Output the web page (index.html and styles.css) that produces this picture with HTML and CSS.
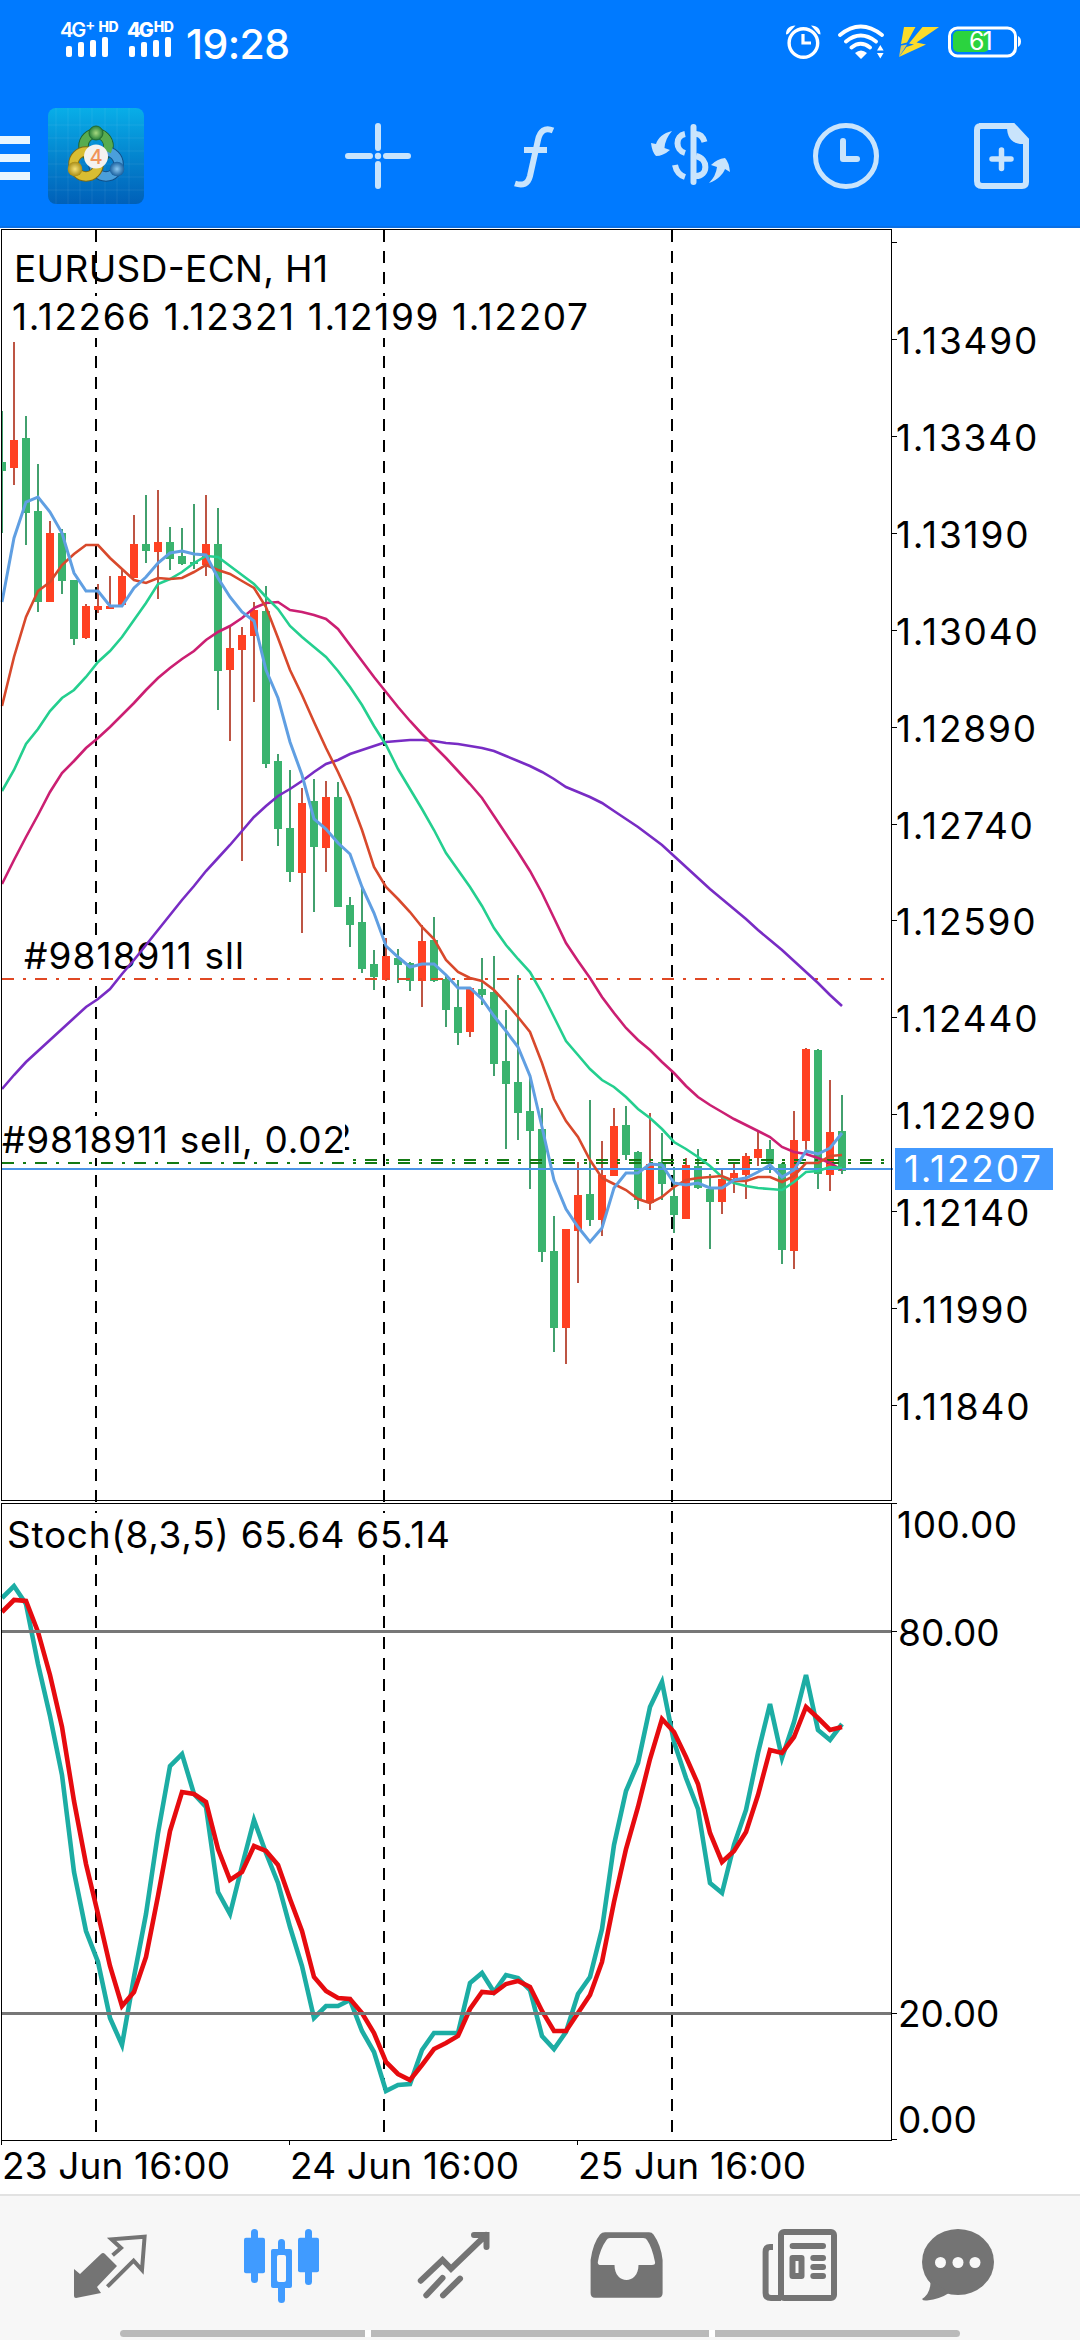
FILE: index.html
```html
<!DOCTYPE html>
<html lang="en">
<head>
  <meta charset="UTF-8">
  <meta name="viewport" content="width=device-width, initial-scale=1.0">
  <title>EURUSD-ECN, H1</title>
  <link rel="stylesheet" href="styles.css">
</head>
<body>
  <header class="header">
    <div class="status-bar">
      <div class="signal">
        <div class="network">4G<sup>+</sup><b>HD</b></div>
        <svg width="42" height="20" viewBox="0 0 42 20"><rect x="0" y="9" width="6" height="11" rx="2"/><rect x="12" y="5" width="6" height="15" rx="2"/><rect x="24" y="3" width="6" height="17" rx="2"/><rect x="36" y="0" width="6" height="20" rx="2"/></svg>
      </div>
      <div class="signal second">
        <div class="network strong">4G<b>HD</b></div>
        <svg width="42" height="20" viewBox="0 0 42 20"><rect x="0" y="9" width="6" height="11" rx="2"/><rect x="12" y="5" width="6" height="15" rx="2"/><rect x="24" y="3" width="6" height="17" rx="2"/><rect x="36" y="0" width="6" height="20" rx="2"/></svg>
      </div>
      <div class="clock">19:28</div>
      <div class="status-icons">
        <svg class="alarm" width="36" height="36" viewBox="0 0 36 36">
          <circle cx="18.4" cy="19" r="14.3" fill="none" stroke="#fff" stroke-width="3.4"/>
          <path d="M18 10v9h8" fill="none" stroke="#fff" stroke-width="3.2"/>
          <path d="M1 10.500C1 5 4 1.500 10.500 1.500L3 10zM35.500 10.500C35.500 5 32.500 1.500 26 1.500L33.500 10z" fill="#fff"/>
        </svg>
        <svg class="wifi" width="48" height="36" viewBox="0 0 48 36">
          <g fill="none" stroke="#fff" stroke-width="3.8" stroke-linecap="round">
            <path d="M3 11Q23.500 -6 45 11M9 17.500Q23.500 5.500 39 17.500M14.500 23.500Q23.500 16 33 23.500"/>
          </g>
          <path d="M18 29Q24 24 30 29L24 35zM40 26.500L43.300 21 46.600 26.500zM40 29L43.300 34.500 46.600 29z" fill="#fff"/>
        </svg>
        <svg class="bolt" width="42" height="32" viewBox="0 0 42 32">
          <path d="M6 1H17.500L9 16.500 3 18zM24.500 1H41L18.500 16.500 28 18.500 1 31 8.500 21 16 18.500 11 17.500z" fill="#fbdb2c"/>
          <path d="M3 19.500L9 18.500 1 31z" fill="#d7c95e"/>
        </svg>
        <svg class="battery" width="73" height="32" viewBox="0 0 73 32">
          <rect x="5" y="5" width="36" height="21" rx="5" fill="#2bd33f"/>
          <rect x="1.500" y="2" width="66" height="28" rx="8" fill="none" stroke="#fff" stroke-width="3"/>
          <path d="M70 10c4 2 4 9 0 11z" fill="#fff"/>
          <text x="21" y="24">61</text>
        </svg>
      </div>
    </div>
    <div class="toolbar">
      <div class="menu"><span></span><span></span><span></span></div>
      <svg class="app-icon" width="96" height="96" viewBox="0 0 96 96">
        <defs>
          <linearGradient id="tile" x1="0" y1="0" x2="0" y2="1"><stop offset="0" stop-color="#08aee8"/><stop offset=".5" stop-color="#0485cf"/><stop offset="1" stop-color="#0060b8"/></linearGradient>
          <radialGradient id="green"><stop offset="0" stop-color="#a6d97f"/><stop offset="1" stop-color="#27803a"/></radialGradient>
          <radialGradient id="yellow"><stop offset="0" stop-color="#f6e277"/><stop offset="1" stop-color="#a88c16"/></radialGradient>
          <radialGradient id="blue"><stop offset="0" stop-color="#8cc8f0"/><stop offset="1" stop-color="#19609f"/></radialGradient>
        </defs>
        <rect width="96" height="96" rx="8" fill="url(#tile)"/>
        <path d="M8 0V96M20 0V96M32 0V96M44 0V96M57 0V96M69 0V96M81 0V96M0 17H96M0 30H96M0 43H96M0 56H96M0 69H96M0 82H96" stroke="#fff" stroke-opacity=".07"/>
        <circle cx="48" cy="38" r="12.500" fill="none" stroke="#1f6330" stroke-width="10.500"/>
        <circle cx="48" cy="38" r="12.500" fill="none" stroke="#57ac4f" stroke-width="8.500"/>
        <circle cx="58" cy="56" r="12.500" fill="none" stroke="#114f87" stroke-width="10.500"/>
        <circle cx="58" cy="56" r="12.500" fill="none" stroke="#4a9fdb" stroke-width="8.500"/>
        <circle cx="38" cy="56" r="12.500" fill="none" stroke="#7c6b16" stroke-width="10.500"/>
        <circle cx="38" cy="56" r="12.500" fill="none" stroke="#d9bd32" stroke-width="8.500"/>
        <path d="M48 25.500a12.500 12.500 0 0 1 11 18" fill="none" stroke="#57ac4f" stroke-width="8.500"/>
        <circle cx="48" cy="25" r="7" fill="url(#green)" stroke="#236b2f"/>
        <circle cx="27" cy="61" r="7.300" fill="url(#yellow)"/>
        <circle cx="69" cy="61" r="7.300" fill="url(#blue)"/>
        <circle cx="48" cy="48.500" r="12" fill="#f4f2f0"/>
        <text x="41.500" y="55.500">4</text>
      </svg>
      <svg class="tool crosshair" width="66" height="66" viewBox="0 0 66 66">
        <path d="M33 3V25M33 41V63M3 33H25M41 33H63" stroke-width="6" stroke-linecap="round"/>
        <circle class="solid" cx="33" cy="33" r="3.200"/>
      </svg>
      <svg class="tool function" width="42" height="62" viewBox="0 0 42 62">
        <path d="M40 4.500C32 1 27 5 25 14L17 50C15 58 10 60 2 57.500M11 24H34" stroke-width="6"/>
      </svg>
      <svg class="tool trade" width="80" height="62" viewBox="0 0 80 62">
        <path d="M42.500 3V58" stroke-width="6" stroke-linecap="round"/>
        <path d="M34 10C24 12 24 26 34 29M45 10C50 10 52 13 53.500 18M34 53C28 51 25 46 24 41M45 32C58 35 57 52 45 52" stroke-width="6"/>
        <path class="solid" d="M21 7C12 9 7 14 5 20L0 19Q1 28 5 32Q12 32 19 26L13.500 24Q14 15 21 7zM58 59C67 56 72 50 74 45L79 48Q78 38 74 34Q66 35 60 41L66 43Q65 52 58 59z"/>
      </svg>
      <svg class="tool history" width="66" height="66" viewBox="0 0 66 66">
        <circle cx="33" cy="33" r="30.500" stroke-width="5"/>
        <path d="M30 18V36H44" stroke-width="6" stroke-linecap="round" stroke-linejoin="round"/>
      </svg>
      <svg class="tool new-order" width="56" height="66" viewBox="0 0 56 66">
        <path d="M5 3H39L52 17V59Q52 63 48 63H8Q3 63 3 58V7Q3 3 7 3z" stroke-width="6"/>
        <path class="solid" d="M33 4H40L54 18V21H46Q33 19 33 4z"/>
        <path d="M27.500 27V45.500M18 36H37" stroke-width="5.500" stroke-linecap="round"/>
      </svg>
    </div>
  </header>

  <main>
    <svg id="chart" class="chart" width="1080" height="1966" viewBox="0 228 1080 1966"></svg>
  </main>

  <footer>
    <nav class="tabs">
      <svg width="76" height="76" viewBox="0 -2 76 76">
        <path class="fill" d="M2 40L8 45 29 25Q31 23 33 25L45 37 25 58 29 64 4 69Q2 69 2 67z"/>
        <path class="line" d="M40.600 26.300L49 19 39.600 10.300 72.600 7.700 70 41 61.600 31.700 35.400 57.700" stroke-width="4"/>
      </svg>
      <svg class="active" width="77" height="77" viewBox="0 0 77 77">
        <rect x="8" y="2" width="7" height="54" rx="3.500"/><rect x="1" y="10.700" width="21" height="35.500" rx="2"/>
        <rect x="35" y="12" width="7" height="64" rx="3.500"/><rect x="28" y="22" width="21" height="39" rx="2"/>
        <rect class="hole" x="34" y="28" width="9" height="27" rx="2"/>
        <rect x="62" y="2" width="7" height="56" rx="3.500"/><rect x="55" y="10.700" width="21" height="34.500" rx="2"/>
      </svg>
      <svg width="76" height="76" viewBox="0 -2 76 76">
        <path class="line" d="M4.800 51.700L26.500 31 35 39.700 70 6M58 6H70.500V18M10.300 66.300L26.500 49M27 66.300L44 49.700" stroke-width="6" stroke-linecap="round" stroke-linejoin="miter"/>
      </svg>
      <svg width="76" height="76" viewBox="0 -2 76 76">
        <path class="fill" fill-rule="evenodd" d="M1.600 31Q4 14 11 5.500Q13 3.300 16 3.300H60Q63 3.300 64.500 5.500Q72 16 73.600 31V64Q73.600 68.700 69 68.700H6Q1.600 68.700 1.600 64zM21 9Q18.500 9 17.500 11Q11 20 8.800 33Q8.500 36 12 36H25.500C25.500 56 49.500 56 49.500 36H63Q66.600 36 66 33Q63 18 58 11Q57 9 54.300 9z"/>
      </svg>
      <svg width="77" height="76" viewBox="0 0 77 76">
        <rect class="line" x="20" y="5" width="53" height="66" rx="3" stroke-width="6"/>
        <path class="line" d="M12 20H9Q4.600 20 4.600 25V66Q4.600 71 10 71H20" stroke-width="6"/>
        <rect x="28.600" y="16" width="36.400" height="6" rx="3"/>
        <rect class="line" x="31.500" y="31" width="9" height="18" stroke-width="6" stroke-linejoin="round"/>
        <rect x="49.300" y="28" width="15.700" height="6" rx="3"/><rect x="49.300" y="37" width="15.700" height="6" rx="3"/><rect x="49.300" y="46" width="15.700" height="6" rx="3"/>
      </svg>
      <svg width="76" height="76" viewBox="0 0 76 76">
        <ellipse cx="38" cy="35" rx="36" ry="33"/>
        <path d="M8 50L10.500 56Q10 67 2 72Q3 74 7 73.500Q20 72 29 66z"/>
        <circle class="hole" cx="20.500" cy="35.500" r="5.500"/><circle class="hole" cx="38" cy="35.500" r="5.500"/><circle class="hole" cx="55" cy="35.500" r="5.500"/>
      </svg>
    </nav>
    <div class="gesture-bar"><span></span><span></span><span></span></div>
  </footer>

  <script src="chart.js"></script>
</body>
</html>
```
FILE: styles.css
```css
* {
  box-sizing: border-box;
}
body {
  margin: 0;
  width: 1080px;
  height: 2340px;
  background: #fff;
  font-family: Inter, Roboto, sans-serif;
  color: #000;
  overflow: hidden;
}
svg {
  display: block;
  flex: none;
}
.header {
  height: 228px;
  background: #007aff;
  border-bottom: 2px solid #0a6fe4;
}

/* status bar */
.status-bar {
  display: flex;
  height: 84px;
  padding: 20px 59px 0 60px;
  color: #fff;
  fill: #fff;
}
.signal {
  width: 67px;
}
.signal.second {
  width: 59px;
}
.signal svg {
  margin: 1px 0 0 6px;
}
.signal.second svg {
  margin-left: 2px;
}
.network {
  display: flex;
  height: 16px;
  font-size: 20px;
  line-height: 20px;
  font-weight: 600;
  letter-spacing: -2px;
  white-space: nowrap;
}
.network.strong {
  font-weight: 800;
}
.network sup {
  font-size: 15px;
  line-height: 10px;
  margin: 0 3px 0 1px;
}
.network b {
  font-size: 14px;
  line-height: 14px;
  font-weight: 800;
  letter-spacing: -.5px;
  margin-left: 2px;
}
.clock {
  font-size: 41px;
  line-height: 48px;
  font-weight: 500;
  letter-spacing: -.6px;
}
.status-icons {
  display: flex;
  margin-left: auto;
}
.alarm {
  margin: 4px 16px 0 0;
}
.wifi {
  margin: 4px 13px 0 0;
}
.bolt {
  margin: 6px 8px 0 0;
}
.battery {
  margin-top: 6px;
}
.battery text {
  font-size: 25px;
  letter-spacing: -2px;
}

/* toolbar */
.toolbar {
  display: flex;
  align-items: flex-start;
  padding-top: 24px;
}
.menu {
  display: grid;
  gap: 10px;
  width: 30px;
  margin: 28px 18px 0 0;
}
.menu span {
  height: 8px;
  background: #e8f6ff;
}
.app-icon text {
  font-size: 20px;
  font-weight: 500;
  fill: #f0945a;
}
.tool {
  margin-top: 15px;
  fill: none;
  stroke: #c9e4fc;
}
.tool .solid {
  fill: #c9e4fc;
  stroke: none;
}
.crosshair {
  margin-left: 201px;
}
.function {
  margin: 18px 0 0 102px;
}
.trade {
  margin: 16px 0 0 96px;
}
.history {
  margin-left: 82px;
}
.new-order {
  margin-left: 95px;
}

/* chart */
.chart text {
  font-size: 37px;
}
.chart .crisp {
  shape-rendering: crispEdges;
}
.frame {
  fill: none;
  stroke: #000;
}
.separator {
  stroke: #000;
  stroke-width: 2;
  stroke-dasharray: 12 9;
}
.level {
  stroke: #777;
  stroke-width: 3;
}
.mask {
  fill: #fff;
}
.wick-up {
  stroke: #bd5544;
  stroke-width: 2;
}
.wick-down {
  stroke: #42a06e;
  stroke-width: 2;
}
.body-up {
  fill: #ff4122;
}
.body-down {
  fill: #3ab36e;
}
.ma {
  fill: none;
  stroke-width: 2.6;
}
.ma.fast {
  stroke: #609fe2;
  stroke-width: 3;
}
.ma.orange {
  stroke: #d8492c;
}
.ma.green {
  stroke: #24cf8f;
}
.ma.magenta {
  stroke: #cb1f72;
}
.ma.slow {
  stroke: #782cc4;
}
.stoch {
  fill: none;
  stroke-width: 4.6;
}
.stoch.main {
  stroke: #1cada4;
}
.stoch.signal-line {
  stroke: #e60b0f;
}
.order {
  stroke-width: 2;
  stroke-dasharray: 12 9 3 9;
}
.order.stop {
  stroke: #e04824;
}
.order.open {
  stroke: #147a14;
}
.bid {
  stroke: #4a94e6;
  stroke-width: 2;
}
.price-tag {
  fill: #4299ff;
}
.chart .price {
  letter-spacing: 1.8px;
}
.chart .percent {
  letter-spacing: .6px;
}
.chart .current {
  fill: #fff;
}

/* bottom tabs */
footer {
  height: 146px;
  background: #f7f7f7;
  border-top: 2px solid #e2e2e2;
}
.tabs {
  display: grid;
  grid-template-columns: 171px 173px 173px 172px 159px 76px;
  height: 134px;
  padding: 31px 0 0 72px;
  fill: #747474;
}
.tabs .line {
  fill: none;
  stroke: #747474;
}
.tabs .active {
  fill: #409bff;
}
.tabs .hole {
  fill: #f8f8f8;
}
.gesture-bar {
  display: grid;
  grid-template-columns: 245px 1fr 245px;
  gap: 6px;
  width: 840px;
  margin: 0 auto;
  background: #fff;
  border-radius: 4px;
}
.gesture-bar span {
  height: 7px;
  background: #bababa;
}
.gesture-bar span:first-child {
  border-radius: 4px 0 0 4px;
}
.gesture-bar span:last-child {
  border-radius: 0 4px 4px 0;
}
```
FILE: chart.js
```javascript
// one bar every 12px, first bar at x = 2
const STEP = 12;
const X0 = 2;

// [up, high, body top, body bottom, low]
const candles = [
  [0,411,462,471,533],[1,342,440,468,485],[0,416,438,513,545],[0,464,511,602,612],[1,521,533,602,602],
  [0,529,533,581,594],[0,580,580,639,645],[1,604,606,638,639],[1,584,606,610,613],[1,576,606,609,609],
  [1,568,576,605,607],[1,515,544,578,578],[0,495,544,551,563],[1,490,542,552,599],[0,527,542,559,570],
  [0,528,556,564,565],[0,504,562,564,569],[1,495,544,565,576],[0,508,544,671,710],[1,627,648,670,741],
  [1,627,635,650,861],[1,602,610,636,702],[0,586,611,764,768],[0,754,761,829,846],[0,770,828,872,882],
  [1,788,803,873,933],[0,779,801,847,912],[1,781,797,848,872],[0,782,797,907,907],[0,897,905,925,947],
  [0,888,922,969,973],[0,950,964,977,990],[1,938,956,980,981],[0,949,958,965,983],[0,962,963,981,991],
  [1,925,941,981,1007],[0,917,940,981,982],[0,975,979,1010,1027],[0,980,1007,1033,1045],[1,987,988,1032,1037],
  [0,958,989,995,1005],[0,956,992,1064,1076],[0,1010,1061,1084,1149],[0,975,1082,1113,1140],[0,1076,1111,1131,1189],
  [0,1108,1129,1252,1262],[0,1216,1251,1328,1352],[1,1229,1229,1328,1364],[1,1162,1195,1231,1283],[0,1100,1194,1220,1226],
  [1,1141,1175,1220,1236],[1,1108,1126,1176,1176],[0,1106,1125,1155,1160],[0,1151,1152,1200,1209],[1,1113,1164,1203,1210],
  [0,1133,1162,1184,1200],[0,1167,1196,1215,1233],[1,1158,1165,1219,1219],[0,1149,1166,1188,1189],[0,1174,1189,1202,1249],
  [1,1169,1179,1202,1214],[1,1162,1173,1178,1193],[1,1153,1156,1175,1199],[1,1130,1149,1158,1166],[0,1140,1149,1164,1173],
  [0,1163,1164,1250,1264],[1,1111,1140,1251,1269],[1,1048,1049,1141,1155],[0,1049,1050,1174,1189],[1,1080,1132,1175,1191],
  [0,1095,1131,1171,1174]
];

const averages = {
  slow: [1089,1075,1062,1051,1040,1029,1018,1007,999,989,974,960,945,930,915,900,886,871,858,845,831,817,806,796,789,781,772,764,760,754,750,746,742,741,740,740,741,743,744,746,748,751,756,761,766,772,779,787,792,797,803,811,819,827,836,845,856,867,878,889,899,909,919,930,940,950,961,972,983,995,1006],
  magenta: [884,860,837,815,792,773,761,748,738,727,715,703,690,678,668,659,651,640,632,626,618,608,603,602,610,612,615,619,629,645,661,677,692,707,721,734,746,758,771,784,798,816,834,852,871,893,918,943,961,978,997,1013,1028,1040,1050,1062,1073,1086,1097,1105,1112,1119,1125,1131,1137,1147,1152,1154,1158,1163,1170],
  green: [791,770,744,729,711,698,690,677,662,651,637,620,603,584,579,572,563,556,557,566,575,584,597,609,626,637,647,657,671,687,705,726,745,769,789,809,830,853,870,887,906,928,945,959,972,993,1017,1041,1055,1069,1080,1087,1097,1109,1118,1129,1142,1149,1157,1166,1177,1183,1186,1188,1189,1190,1182,1172,1171,1167,1168],
  orange: [706,657,617,591,582,565,554,545,545,558,569,580,583,578,579,578,572,565,570,574,581,588,607,638,670,695,722,748,772,798,830,867,887,899,912,927,939,960,972,978,981,990,1003,1017,1032,1063,1099,1121,1137,1160,1178,1184,1190,1199,1203,1197,1187,1180,1178,1177,1176,1181,1181,1177,1177,1182,1176,1163,1163,1156,1155],
  fast: [602,538,502,497,512,533,573,591,591,606,606,588,577,563,553,551,554,555,578,597,612,621,670,698,742,775,819,829,843,854,887,913,946,957,967,964,964,975,988,988,999,1016,1031,1047,1076,1127,1180,1209,1227,1242,1228,1188,1173,1173,1164,1165,1183,1185,1183,1188,1188,1180,1178,1172,1165,1177,1170,1151,1154,1148,1133]
};

const stochMain = [1598,1586,1604,1664,1716,1775,1872,1931,1962,2018,2045,1977,1914,1833,1766,1754,1794,1807,1892,1914,1866,1820,1853,1883,1927,1966,2018,2006,2006,2000,2031,2052,2091,2085,2084,2050,2033,2033,2033,1983,1973,1992,1975,1978,1990,2036,2049,2032,1994,1977,1929,1845,1791,1763,1707,1682,1742,1778,1809,1883,1893,1845,1810,1753,1704,1758,1722,1675,1730,1740,1724];
const stochSignal = [1612,1600,1601,1632,1675,1727,1801,1864,1914,1966,2006,1992,1957,1896,1831,1792,1794,1802,1849,1880,1872,1846,1851,1865,1899,1931,1977,1991,1998,1999,2013,2033,2062,2074,2080,2065,2049,2043,2036,2009,1992,1993,1984,1981,1987,2011,2031,2031,2013,1995,1962,1902,1849,1807,1759,1719,1732,1757,1784,1833,1862,1851,1832,1795,1750,1753,1737,1707,1718,1730,1727];

const out = [];

function line(cls, x1, y1, x2, y2) {
  out.push(`<line class="${cls}" x1="${x1}" y1="${y1}" x2="${x2}" y2="${y2}"/>`);
}
function rect(cls, x, y, w, h) {
  out.push(`<rect class="${cls}" x="${x}" y="${y}" width="${w}" height="${h}"/>`);
}
function label(str, x, y, width, cls) {
  const fit = width ? ` textLength="${width}"` : '';
  out.push(`<text class="${cls || ''}" x="${x}" y="${y}"${fit}>${str}</text>`);
}
function series(cls, ys) {
  const points = ys.map((y, i) => `${X0 + i * STEP},${y}`).join(' ');
  out.push(`<polyline class="${cls}" points="${points}"/>`);
}

// day separators
[96, 384, 672].forEach(x => line('separator crisp', x, 230, x, 2132));

// labels sit on their own white strip
rect('mask', 12, 296, 580, 42);
rect('mask', 20, 935, 226, 42);
rect('mask', 6, 1513, 446, 42);
label('EURUSD-ECN, H1', 14, 282, 314);
label('1.12266 1.12321 1.12199 1.12207', 12, 330, 576);
label('#9818911 sll', 24, 969, 220);
label('Stoch(8,3,5) 65.64 65.14', 7, 1548, 443);
// tail of the previous order label
label('2', 329, 1150);
rect('mask', 3, 1116, 342, 42);
label('#9818911 sell, 0.02', 2, 1153, 343);

// candles
out.push('<g class="crisp">');
candles.forEach(([up, high, top, bottom, low], i) => {
  const x = X0 + i * STEP;
  const dir = up ? 'up' : 'down';
  line('wick-' + dir, x, high, x, low);
  rect('body-' + dir, i ? x - 4 : x, top, i ? 8 : 4, bottom - top);
});
out.push('</g>');

// order lines and bid
line('order stop crisp', 2, 979, 891, 979);
line('order open crisp', 2, 1163, 891, 1163);
out.push('<path class="order open crisp" stroke-dashoffset="21" d="M353 1160H891"/>');
line('bid crisp', 2, 1169, 893, 1169);

Object.keys(averages).forEach(name => series('ma ' + name, averages[name]));
series('stoch main', stochMain);
series('stoch signal-line', stochSignal);
line('level crisp', 2, 1631.5, 891, 1631.5);
line('level crisp', 2, 2013.5, 891, 2013.5);

// frames
out.push('<path class="frame crisp" d="M1.5 229.500H891.500V1500.500H1.500zM1.500 1503.500H891.500V2140.500H1.500z"/>');
[2, 290, 578].forEach(x => line('frame crisp', x - .5, 2140, x - .5, 2145));

// price axis
line('frame crisp', 891, 242.5, 897, 242.5);
for (let i = 0; i < 12; i++) {
  const y = 339.5 + i * 96.9;
  line('frame crisp', 891, y, 897, y);
  label((1.1349 - i * 0.0015).toFixed(5), 896, y + 14.5, 0, 'price');
}
rect('price-tag', 895, 1148, 158, 42);
label('1.12207', 904, 1182, 0, 'price current');

// stochastic axis
[1503.5, 1631.5, 2013.5, 2139.5].forEach(y => line('frame crisp', 891, y, 897, y));
label('100.00', 897, 1538, 0, 'percent');
label('80.00', 898, 1646);
label('20.00', 898, 2027);
label('0.00', 898, 2133);

// time axis
label('23 Jun 16:00', 2, 2179, 228);
label('24 Jun 16:00', 290, 2179, 229);
label('25 Jun 16:00', 578, 2179, 228);

document.getElementById('chart').innerHTML = out.join('');
```
